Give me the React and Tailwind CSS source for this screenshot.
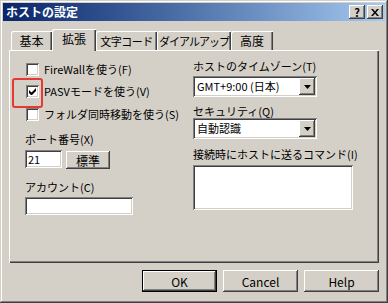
const raised =
  "bg-[#d4d0c8] shadow-[inset_-1px_-1px_#404040,inset_1px_1px_#fff,inset_-2px_-2px_#808080]";
const sunken =
  "bg-white shadow-[inset_1px_1px_#808080,inset_-1px_-1px_#fff,inset_2px_2px_#404040,inset_-2px_-2px_#d4d0c8]";

function CheckBox({ checked, label }) {
  return (
    <div className="flex h-[13px] items-center gap-[5px] pl-[1px]">
      <div className={`${sunken} flex h-[13px] w-[13px] shrink-0 items-center justify-center`}>
        {checked && (
          <svg width="7" height="7" viewBox="0 0 7 7">
            <path d="M0 2v3l2 2h1l4-4V0L2.5 4.5z" fill="#000" />
          </svg>
        )}
      </div>
      <span className="leading-[13px] whitespace-nowrap">{label}</span>
    </div>
  );
}

function Select({ value }) {
  return (
    <div className={`${sunken} flex h-[21px] w-[124px] items-center p-[2px]`}>
      <span className="flex-1 pl-[2px] leading-[13px] whitespace-nowrap">{value}</span>
      <div className={`${raised} flex h-[17px] w-[16px] items-center justify-center`}>
        <svg width="7" height="4" viewBox="0 0 7 4">
          <path d="M0 0h7L3.5 4z" fill="#000" />
        </svg>
      </div>
    </div>
  );
}

function Tab({ label, className, active }) {
  return (
    <div
      className={`flex items-center justify-center bg-[#d4d0c8] whitespace-nowrap rounded-tl-[2px] shadow-[inset_1px_1px_#fff,inset_-1px_0_#404040,inset_-2px_0_#808080] ${className} ${
        active ? "relative z-10 h-[22px] -mb-[1px] pb-[2px] text-[12px]" : "h-[19px] pt-[1px]"
      }`}
    >
      {label}
    </div>
  );
}

function DlgButton({ label, isDefault }) {
  return (
    <div
      className={`flex h-[22px] w-[75px] items-center justify-center text-[12px] leading-[13px] ${
        isDefault
          ? "bg-[#d4d0c8] shadow-[inset_0_0_0_1px_#000,inset_-2px_-2px_#404040,inset_2px_2px_#fff,inset_-3px_-3px_#808080]"
          : raised
      }`}
    >
      {label}
    </div>
  );
}

export default function App() {
  return (
    <div className="flex h-[303px] w-[388px] flex-col bg-[#d4d0c8] p-[3px] font-['Noto_Sans_CJK_JP',sans-serif] text-[11px] text-black shadow-[inset_-1px_-1px_#404040,inset_1px_1px_#d4d0c8,inset_-2px_-2px_#808080,inset_2px_2px_#fff]">
      {/* title bar */}
      <div className="flex h-[18px] items-center justify-between bg-linear-to-r from-[#0a246a] to-[#a6caf0] pr-[2px] pl-[3px]">
        <span className="text-[12px] font-bold leading-[14px] text-white">ホストの設定</span>
        <div className="flex gap-[2px]">
          <div className={`${raised} flex h-[14px] w-[16px] items-center justify-center text-[11px] leading-none font-bold`}>
            ?
          </div>
          <div className={`${raised} flex h-[14px] w-[16px] items-center justify-center`}>
            <svg width="8" height="7" viewBox="0 0 8 7">
              <path d="M0 0h2l2 2.5L6 0h2L5 3.5 8 7H6L4 4.5 2 7H0l3-3.5z" fill="#000" />
            </svg>
          </div>
        </div>
      </div>

      <div className="mt-[8px] flex flex-col px-[6px]">
        {/* tabs */}
        <div className="flex h-[21px] items-end pl-[2px] text-[12px]">
          <Tab label="基本" className="w-[41px]" />
          <Tab label="拡張" className="w-[44px]" active />
          <Tab label="文字コード" className="w-[61px] text-[11px] tracking-[-0.5px]" />
          <Tab label="ダイアルアップ" className="w-[74px] text-[11px] tracking-[-1px]" />
          <Tab label="高度" className="w-[42px]" />
        </div>

        {/* panel */}
        <div className="relative flex h-[213px] pl-[16px] shadow-[inset_1px_1px_#fff,inset_-1px_-1px_#404040,inset_-2px_-2px_#808080]">
          <div className="absolute top-[28px] left-[3px] h-[30px] w-[31px] rounded-[3px] border-2 border-[#e53935]" />

          <div className="flex w-[168px] flex-col pt-[13px]">
            <CheckBox label="FireWallを使う(F)" />
            <div className="mt-[9px]">
              <CheckBox checked label="PASVモードを使う(V)" />
            </div>
            <div className="mt-[10px]">
              <CheckBox label="フォルダ同時移動を使う(S)" />
            </div>
            <span className="mt-[12px] leading-[13px]">ポート番号(X)</span>
            <div className="mt-[4px] flex items-start gap-[4px]">
              <div className={`${sunken} flex h-[18px] w-[37px] items-center pl-[3px] leading-[13px]`}>21</div>
              <div className={`${raised} mt-[1px] flex h-[18px] w-[44px] items-center justify-center text-[12px] leading-[13px]`}>
                標準
              </div>
            </div>
            <span className="mt-[12px] leading-[13px]">アカウント(C)</span>
            <div className={`${sunken} mt-[3px] h-[18px] w-[108px]`} />
          </div>

          <div className="flex flex-col pt-[10px]">
            <span className="leading-[13px]">ホストのタイムゾーン(T)</span>
            <div className="mt-[3px]">
              <Select value="GMT+9:00 (日本)" />
            </div>
            <span className="mt-[8px] leading-[13px]">セキュリティ(Q)</span>
            <Select value="自動認識" />
            <span className="mt-[9px] leading-[13px] whitespace-nowrap">接続時にホストに送るコマンド(I)</span>
            <div className={`${sunken} mt-[4px] h-[45px] w-[160px]`} />
          </div>
        </div>

        {/* buttons */}
        <div className="mt-[7px] flex justify-end gap-[6px]">
          <DlgButton label="OK" isDefault />
          <DlgButton label="Cancel" />
          <DlgButton label="Help" />
        </div>
      </div>
    </div>
  );
}
